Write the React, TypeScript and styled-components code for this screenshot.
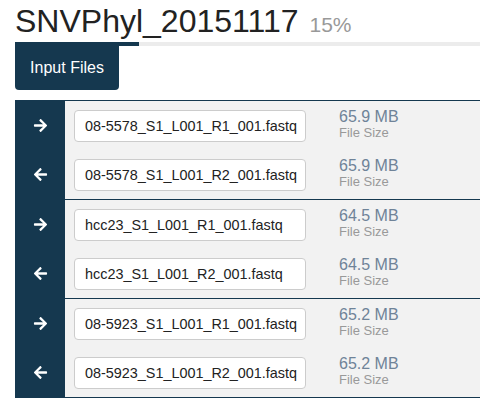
import React from "react";
import styled, { createGlobalStyle } from "styled-components";
import { FaArrowRight, FaArrowLeft } from "react-icons/fa";

const Global = createGlobalStyle`
  html, body { margin: 0; padding: 0; background: #fff; }
  body { font-family: "Liberation Sans", Arial, sans-serif; color: #222; }
`;

const DARK = "#15384f";

const Page = styled.div`
  padding: 0 0 0 15px;
  display: flex;
  flex-direction: column;
`;

const Title = styled.h1`
  margin: 4px 0 0 0;
  font-size: 32px;
  font-weight: 400;
  line-height: 35px;
  height: 35px;
  color: #222;
  white-space: nowrap;
`;

const Percent = styled.small`
  font-size: 21px;
  line-height: 1;
  color: #999;
  margin-left: 11px;
`;

const Track = styled.div`
  margin-top: 3px;
  height: 4px;
  background: #ececec;
  display: flex;
`;

const Fill = styled.div`
  background: ${DARK};
  height: 100%;
`;

const Button = styled.button`
  align-self: flex-start;
  width: 104px;
  height: 44px;
  background: ${DARK};
  color: #fff;
  border: none;
  border-radius: 0 0 4px 4px;
  font-family: "Liberation Sans", Arial, sans-serif;
  font-size: 16px;
  padding: 0;
  cursor: pointer;
`;

const Table = styled.div`
  margin-top: 10px;
  display: flex;
  flex-direction: column;
  border-bottom: 1px solid ${DARK};
`;

const Group = styled.div`
  border-top: 1px solid ${DARK};
  display: flex;
  flex-direction: column;
`;

const Row = styled.div`
  display: grid;
  grid-template-columns: 50px 1fr;
  height: 49px;
`;

const ArrowCell = styled.div`
  background: ${DARK};
  color: #fff;
  display: flex;
  align-items: center;
  justify-content: center;
  font-size: 15px;
`;

const Body = styled.div`
  background: #f2f2f2;
  display: flex;
  align-items: center;
  padding-left: 9px;
`;

const FileInput = styled.div`
  width: 232px;
  height: 32px;
  box-sizing: border-box;
  border: 1px solid #ccc;
  border-radius: 4px;
  background: #fff;
  display: flex;
  align-items: center;
  padding-left: 10px;
  font-size: 14.4px;
  color: #222;
  white-space: nowrap;
  overflow: hidden;
`;

const Size = styled.div`
  margin-left: 33px;
  display: flex;
  flex-direction: column;
  margin-top: -3px;
`;

const SizeValue = styled.span`
  font-size: 16px;
  line-height: 17px;
  color: #6f8398;
`;

const SizeLabel = styled.span`
  font-size: 13px;
  line-height: 15px;
  color: #999;
`;

type Pair = { r1: string; r2: string; size: string };

const pairs: Pair[] = [
  { r1: "08-5578_S1_L001_R1_001.fastq", r2: "08-5578_S1_L001_R2_001.fastq", size: "65.9 MB" },
  { r1: "hcc23_S1_L001_R1_001.fastq", r2: "hcc23_S1_L001_R2_001.fastq", size: "64.5 MB" },
  { r1: "08-5923_S1_L001_R1_001.fastq", r2: "08-5923_S1_L001_R2_001.fastq", size: "65.2 MB" },
];

function FileRow({ name, size, forward }: { name: string; size: string; forward: boolean }) {
  return (
    <Row>
      <ArrowCell>{forward ? <FaArrowRight /> : <FaArrowLeft />}</ArrowCell>
      <Body>
        <FileInput>{name}</FileInput>
        <Size>
          <SizeValue>{size}</SizeValue>
          <SizeLabel>File Size</SizeLabel>
        </Size>
      </Body>
    </Row>
  );
}

export default function App() {
  return (
    <>
      <Global />
      <Page>
        <Title>
          SNVPhyl_20151117<Percent>15%</Percent>
        </Title>
        <Track>
          <Fill style={{ width: "124px" }} />
        </Track>
        <Button>Input Files</Button>
        <Table>
          {pairs.map((p) => (
            <Group key={p.r1}>
              <FileRow name={p.r1} size={p.size} forward />
              <FileRow name={p.r2} size={p.size} forward={false} />
            </Group>
          ))}
        </Table>
      </Page>
    </>
  );
}
